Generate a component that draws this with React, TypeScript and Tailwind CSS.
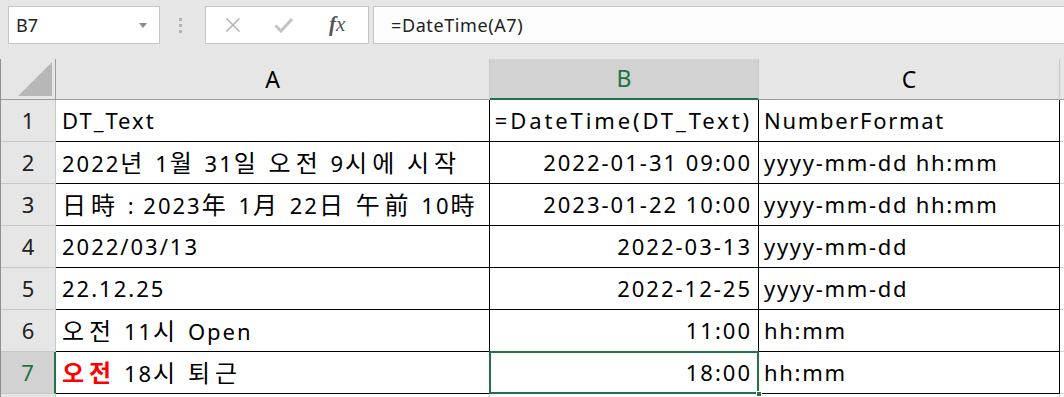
import { ReactNode } from 'react';

type Row = {
  a: ReactNode;
  b: string;
  c: string;
  wideB?: boolean;
};

// Hangul / CJK glyphs run a bit wider in the reference than in Noto, so give them their own span
function Cjk({ text }: { text: string }) {
  const parts = text.split(/([\u3131-\uD79D\u4E00-\u9FFF]+)/);
  return (
    <>
      {parts.map((part, i) =>
        i % 2 === 1 ? (
          <span key={i} className="text-[24px] tracking-[5px]">
            {part}
          </span>
        ) : (
          <span key={i}>{part}</span>
        ),
      )}
    </>
  );
}

const rows: Row[] = [
  { a: 'DT_Text', b: '=DateTime(DT_Text)', c: 'NumberFormat', wideB: true },
  { a: <Cjk text="2022년 1월 31일 오전 9시에 시작" />, b: '2022-01-31 09:00', c: 'yyyy-mm-dd hh:mm' },
  { a: <Cjk text="日時 : 2023年 1月 22日 午前 10時" />, b: '2023-01-22 10:00', c: 'yyyy-mm-dd hh:mm' },
  { a: '2022/03/13', b: '2022-03-13', c: 'yyyy-mm-dd' },
  { a: '22.12.25', b: '2022-12-25', c: 'yyyy-mm-dd' },
  { a: <Cjk text="오전 11시 Open" />, b: '11:00', c: 'hh:mm' },
  {
    a: (
      <>
        <span className="font-bold text-[#ff0000]">
          <Cjk text="오전" />
        </span>{' '}
        <Cjk text="18시 퇴근" />
      </>
    ),
    b: '18:00',
    c: 'hh:mm',
  },
];

const font = "font-['Noto_Sans','Noto_Sans_CJK_KR',sans-serif]";

function FormulaBar() {
  return (
    <div className="flex h-[50px] items-start pt-[6px] pl-[8px]">
      <div className="flex h-[38px] w-[152px] items-center justify-between border border-[#c6c6c6] bg-white pr-[12px] pl-[7px]">
        <span className="text-[18px] text-[#222]">B7</span>
        <svg width="8" height="5" viewBox="0 0 8 5">
          <path d="M0 0h8L4 5z" fill="#8a8a8a" />
        </svg>
      </div>
      <div className="ml-[19px] flex h-[38px] flex-col justify-center gap-[3px]">
        <span className="block h-[3px] w-[3px] bg-[#b4b4b4]" />
        <span className="block h-[3px] w-[3px] bg-[#b4b4b4]" />
        <span className="block h-[3px] w-[3px] bg-[#b4b4b4]" />
      </div>
      <div className="ml-[23px] flex h-[38px] w-[164px] items-center border border-[#c6c6c6] bg-white">
        <svg className="ml-[19px]" width="16" height="16" viewBox="0 0 16 16">
          <path d="M1.5 1.5l13 13M14.5 1.5l-13 13" stroke="#b5b5b5" strokeWidth="1.6" />
        </svg>
        <svg className="ml-[33px]" width="20" height="16" viewBox="0 0 20 16">
          <path d="M1.5 8.5l5.5 5.5 11-12" stroke="#c3c3c3" strokeWidth="3" fill="none" />
        </svg>
        <span className="ml-[35px] font-['Liberation_Serif',serif] text-[21px] italic text-[#555]">
          <span className="font-bold">f</span>x
        </span>
      </div>
      <div className="ml-[4px] flex h-[38px] flex-1 items-center border border-r-0 border-[#c6c6c6] bg-[#fdfdfd] pl-[17px]">
        <span className="text-[18px] tracking-[0.6px] text-[#222]">=DateTime(A7)</span>
      </div>
    </div>
  );
}

function Sheet() {
  return (
    <div className="grid grid-cols-[55px_434px_269px_301px_1fr] grid-rows-[41px_repeat(8,42px)] border-l border-[#8f8f8f]">
      {/* corner */}
      <div className="relative border-r border-b border-[#9e9e9e]">
        <svg className="absolute right-[3px] bottom-[3px]" width="34" height="34" viewBox="0 0 34 34">
          <path d="M34 0V34H0z" fill="#b7b7b7" />
        </svg>
      </div>
      <div className="flex items-center justify-center border-r border-b border-r-[#c8c8c8] border-b-[#9e9e9e] text-[23px] text-black">
        A
      </div>
      <div className="flex items-center justify-center border-r border-b-2 border-r-[#c8c8c8] border-b-[#217346] bg-[#d2d2d2] text-[23px] text-[#217346]">
        B
      </div>
      <div className="flex items-center justify-center border-r border-b border-r-[#c8c8c8] border-b-[#9e9e9e] text-[23px] text-black">
        C
      </div>
      <div className="border-b border-[#9e9e9e]" />

      {rows.map((row, i) => {
        const selected = i === 6;
        return (
          <div key={i} className="contents">
            <div
              className={
                selected
                  ? 'flex items-center justify-center border-r-2 border-b border-r-[#217346] border-b-[#c8c8c8] bg-[#d2d2d2] text-[22px] text-[#217346]'
                  : 'flex items-center justify-center border-r border-b border-[#c8c8c8] text-[22px] text-[#222]'
              }
            >
              {i + 1}
            </div>
            <div className="overflow-hidden border-r border-b border-black bg-white pl-[6px] text-[22px] leading-[41px] tracking-[2px] whitespace-nowrap text-black">
              {row.a}
            </div>
            <div
              className={`relative border-r border-b border-black bg-white pr-[6px] text-right text-[22px] leading-[41px] whitespace-nowrap text-black ${
                row.wideB ? 'tracking-[2.9px]' : 'tracking-[2px]'
              }`}
            >
              {row.b}
              {selected && (
                <>
                  <span className="pointer-events-none absolute -top-[1px] -right-[1px] -bottom-[1px] -left-[1px] border-2 border-[#217346]" />
                  <span className="absolute -right-[4px] -bottom-[4px] h-[6px] w-[6px] border border-white bg-[#217346]" />
                </>
              )}
            </div>
            <div className="overflow-hidden border-r border-b border-black bg-white pl-[5px] text-[22px] leading-[41px] tracking-[1.7px] whitespace-nowrap text-black">
              {row.c}
            </div>
            <div className="border-b border-[#d4d4d4] bg-white" />
          </div>
        );
      })}

      <div className="border-r border-[#c8c8c8]" />
      <div className="border-r border-[#d4d4d4] bg-white" />
      <div className="border-r border-[#d4d4d4] bg-white" />
      <div className="border-r border-[#d4d4d4] bg-white" />
      <div className="bg-white" />
    </div>
  );
}

export default function App() {
  return (
    <div className={`h-[397px] w-[1064px] overflow-hidden bg-[#e6e6e6] ${font}`}>
      <FormulaBar />
      <div className="h-[9px]" />
      <Sheet />
    </div>
  );
}
